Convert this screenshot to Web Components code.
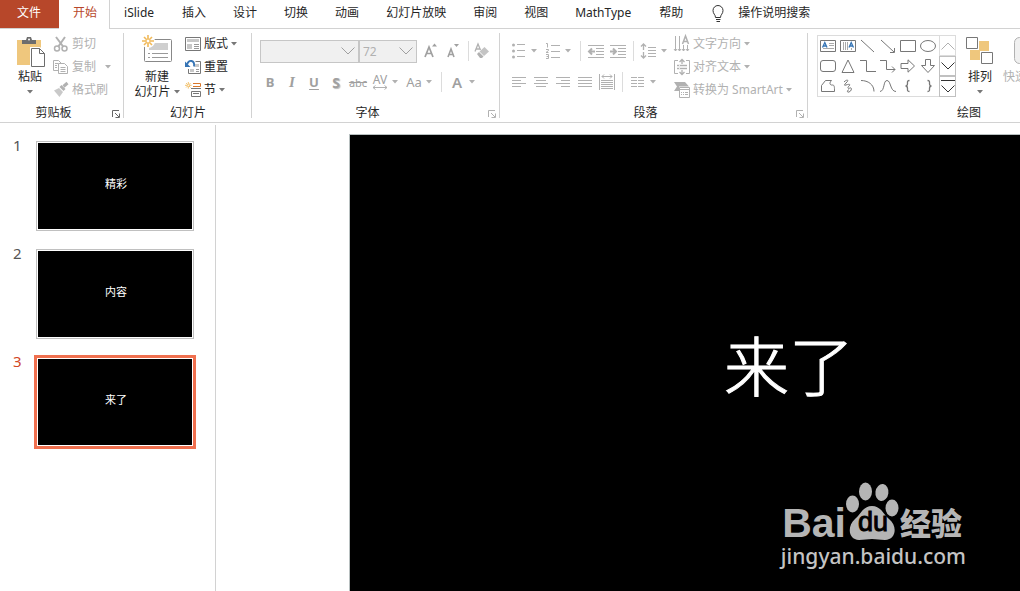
<!DOCTYPE html>
<html lang="zh-CN">
<head>
<meta charset="utf-8">
<title>演示文稿</title>
<style>
html,body{margin:0;height:100%}
body{font:12px/15px "Noto Sans","Noto Sans CJK SC",sans-serif;color:#262626;background:#fff;overflow:hidden}
</style>
</head>
<body>
<slide-app></slide-app>
<script>
const G='#b1b1b1', D='#777', Y='#efc77d', B='#3574b5', O='#d9772b';
const star='<path d="M6 0v12M0 6h12M2 2l8 8M10 2l-8 8" stroke="#f0b95a" stroke-width="1.6" fill="none"/><circle cx="6" cy="6" r="2" fill="#fff" stroke="#f0b95a"/>';
const lines=(list,c=G)=>list.map(([x,y,w])=>`<path d="M${x} ${y}.5h${w}" stroke="${c}"/>`).join('');
// name: [width, height, markup]
const ICONS={
 arrow:[6,4,'<path d="M0 0h6L3 3.500z" fill="currentColor"/>'],
 chevron:[14,8,'<path d="M.5 .5 7 7 13.500 .5" fill="none" stroke="currentColor"/>'],
 chevronUp:[14,8,'<path d="M.5 7.500 7 1l6.500 6.500" fill="none" stroke="currentColor"/>'],
 chevronMore:[14,13,'<path d="M0 .5h14M.5 5.500 7 12l6.500-6.500" fill="none" stroke="currentColor"/>'],
 launcher:[8,8,'<path d="M.5 7V.5H7M3 3l4 4M7.500 3.500v4h-4" fill="none" stroke="currentColor"/>'],
 bulb:[12,18,'<path d="M3.500 12.500c0-3-2.500-3.500-2.500-7a5 5 0 0 1 10 0c0 3.500-2.500 4-2.500 7zM4 14.500h4.500M4.500 16.500h3.500" fill="none" stroke="#333"/>'],
 paste:[28,31,`<path d="M0 3h24v25H0z" fill="${Y}"/><path d="M5 7V3h4l1-3h4l1 3h4v4z" fill="#6d6d6d"/><circle cx="12" cy="2.500" r="1" fill="#fff"/><path d="M13 10h10l6 6v15H13z" fill="#fff"/><path d="M14.500 11.500h8l5 5v13h-13z" fill="#fff" stroke="#6d6d6d"/><path d="M22.500 11.500v5h5" fill="none" stroke="#6d6d6d"/>`],
 cut:[16,16,`<path d="M3 1l7.500 10M12 1 5 11" stroke="${G}" stroke-width="2"/><circle cx="4" cy="12.500" r="2.500" fill="none" stroke="${G}" stroke-width="1.500"/><circle cx="11.500" cy="12.500" r="2.500" fill="none" stroke="${G}" stroke-width="1.500"/>`],
 copy:[16,16,`<path d="M5 11.500H.5v-10h5l3 3" fill="none" stroke="${G}"/><path d="M5.500 4.500h6l3 3v7h-9z" fill="#fff" stroke="${G}"/><path d="M2 4.500h3M2 6.500h2M2 8.500h2M7.500 8.500h5M7.500 10.500h5M7.500 12.500h5" stroke="${G}"/>`],
 brush:[16,16,`<path d="M1 8.500 6 6l4 4-3.500 5z" fill="#c9c9c9"/><path d="M6.500 5 8.500 3 12.500 7l-2 2z" fill="${G}"/><path d="M10.500 4.500 14.500 1" stroke="${G}" stroke-width="3"/>`],
 newslide:[30,28,`<rect x="2.500" y="4.500" width="27" height="22" rx="1" fill="#fff" stroke="#888"/><path d="M7 8h19v7H7z" fill="#cfcfcf"/><path d="M6 18.500h2M10 18.500h16M6 22.500h2M10 22.500h16" stroke="#999"/><circle cx="6" cy="6" r="7" fill="#fff"/>${star}`],
 layout:[16,16,`<path d="M.5 1.500h15v13H.5z" fill="#fff" stroke="#777"/><path d="M2 3h12v3H2zM2 8h5v5H2z" fill="#c8c8c8"/><path d="M9 8.500h5M9 10.500h5M9 12.500h5" stroke="#999"/>`],
 reset:[16,16,`<path d="M10.500 2.500h5v12H3.500V10" fill="#fff" stroke="#777"/><path d="M10 5h4v3h-4zM5 10h4v3H5z" fill="#c8c8c8"/><path d="M11 10.500h3M11 12.500h3" stroke="#999"/><path d="M9 7.500C10 1 4 0 2 5.500" fill="none" stroke="${B}" stroke-width="1.800"/><path d="M0 2.500v5.500h5.500z" fill="${B}"/>`],
 section:[16,16,`<path d="M8 1.500h7.500v3H8" fill="none" stroke="${O}"/><path d="M6 6.500h10" stroke="${D}"/><path d="M6.500 9.500h9v5h-9zM8 11.500h6" fill="none" stroke="${D}"/><g transform="scale(.55)">${star}</g>`],
 growA:[16,16,`<path d="M2 14 6 4l4 10M3.500 10.500h5" fill="none" stroke="#a0a0a0" stroke-width="1.700"/><path d="M9 3.500h5l-2.500-3z" fill="#a0a0a0"/>`],
 shrinkA:[16,16,`<path d="M3 14 6 6l3 8M4 11.500h4" fill="none" stroke="#a0a0a0" stroke-width="1.600"/><path d="M9 1h5l-2.500 3z" fill="#a0a0a0"/>`],
 eraser:[16,16,`<path d="M-1 8.500 2 1l2.500 6M0 6h3.500" fill="none" stroke="${G}" stroke-width="1.300"/><path d="M3.500 8.500 8.500 4 13 8.500 8 13z" fill="#c4c4c4"/><path d="M1 11l2-2 4.500 4.500L6 15H4z" fill="${G}"/>`],
 spacingAV:[16,5,`<path d="M1 2.500h14M3.500 .5l-2.500 2 2.500 2M12.500 .5l2.500 2-2.500 2" fill="none" stroke="${G}"/>`],
 bullets:[16,16,[2,8,14].map(y=>`<circle cx="2.500" cy="${y}" r="1.500" fill="${G}"/><path d="M6 ${y-.5}h8" stroke="${G}"/>`).join('')],
 numbers:[16,16,`<g fill="none" stroke="${G}"><path d="M6 2.500h9M6 8.500h9M6 14.500h9M1 .5h1.500v4M1 6.500h2.500v1L1 9.500h2.500M1 11.500h2.500v4H1M1.500 13.500h2"/></g>`],
 outdent:[16,16,lines([[0,2,16],[8,5,8],[8,8,8],[8,11,8],[0,14,16]])+`<path d="M2 8.500h5M4 5.500l-3 3 3 3" fill="none" stroke="${G}" stroke-width="2"/>`],
 indent:[16,16,lines([[0,2,16],[8,5,8],[8,8,8],[8,11,8],[0,14,16]])+`<path d="M0 8.500h5M3 5.500l3 3-3 3" fill="none" stroke="${G}" stroke-width="2"/>`],
 leading:[16,16,lines([[7,4,8],[7,7,8],[7,10,8],[7,13,8]])+`<path d="M2.500 1v6M2.500 9v6M0 3.500 2.500 1 5 3.500M0 12.500 2.500 15 5 12.500" fill="none" stroke="${G}" stroke-width="1.300"/>`],
 left:[16,16,lines([[1,3,14],[1,6,9],[1,9,14],[1,12,9]])],
 center:[16,16,lines([[1,3,14],[3,6,10],[1,9,14],[3,12,10]])],
 right:[16,16,lines([[1,3,14],[6,6,9],[1,9,14],[6,12,9]])],
 justify:[16,16,lines([[1,3,14],[1,6,14],[1,9,14],[1,12,14]])],
 distribute:[16,16,lines([[2,6,12],[2,8,12],[2,10,12],[2,12,12],[2,14,12]])+`<path d="M.5 0v16M15.500 0v16M3 2.500h10M5 .5l-2 2 2 2M11 .5l2 2-2 2" fill="none" stroke="${G}"/>`],
 columns:[16,16,lines([[1,3,6],[1,6,6],[1,9,6],[1,12,6],[8,3,6],[8,6,6],[8,9,6],[8,12,6]])],
 textdir:[16,16,`<path d="M1.500 0v15M5.500 0v15M9.500 9v6M13.500 9v6M0 13l1.500 2L3 13M4 13l1.500 2L7 13M8 13l1.500 2 1.500-2M12 13l1.500 2 1.500-2" fill="none" stroke="${G}"/><path d="M8.500 8 11.500 0l3 8M9.500 5.500h4" fill="none" stroke="${G}" stroke-width="1.500"/>`],
 aligntext:[16,16,`<path d="M4 1.500H.5v13H4M12 1.500h3.500v13H12" fill="none" stroke="${G}"/><path d="M3 5h10v6H3z" fill="#eee"/><path d="M3 6.500h2M6 6.500h7M3 9.500h2M6 9.500h7" stroke="${G}"/><path d="M8 0v5M8 11v5M5.500 3 8 .5 10.500 3M5.500 13 8 15.500 10.500 13" fill="none" stroke="${G}" stroke-width="1.300"/>`],
 smartart:[16,16,`<path d="M0 0h11l4 4.500H5V9H0l3-4.500z" fill="${G}"/><path d="M5.500 5.500h10v10h-10z" fill="#fff" stroke="${G}"/><path d="M5 7.500h11M7 10.500h1M9 10.500h1M11 10.500h3M7 12.500h1M9 12.500h1M11 12.500h3" stroke="${G}"/>`],
 arrange:[28,28,`<path d="M13 4h10v10H13zM4 13h10v10H4z" fill="${Y}"/><path d="M.5 .5h11v11H.5zM15.500 15.500h11v11h-11z" fill="#fff" stroke="#777"/>`],
 quick:[28,28,'<rect x="1.500" y=".5" width="26" height="26" rx="5" fill="#f0f0f0" stroke="#b1b1b1"/>'],
 textbox:[16,12,`<path d="M.5 .5h15v11H.5z" fill="#fff" stroke="${D}"/><path d="M9 3.500h5M9 5.500h5M3 8.500h11" stroke="#aaa"/><path d="M2.500 7.500 4.800 2.500l2.200 5M3.500 6h3" fill="none" stroke="${B}" stroke-width="1.300"/>`],
 vtextbox:[16,12,`<path d="M.5 .5h15v11H.5z" fill="#fff" stroke="${D}"/><path d="M3.500 2v8M5.500 2v8M7.500 2v8M11.500 8v2" stroke="#aaa"/><path d="M9 7.500 11.200 2.500l2.300 5M10 6h3" fill="none" stroke="${B}" stroke-width="1.300"/>`],
 line:[16,14,`<path d="M1 1l13 12" stroke="${D}"/>`],
 arrowline:[16,14,`<path d="M1 1l13 12M14.500 9v4.500H10" fill="none" stroke="${D}"/>`],
 rect:[16,12,`<path d="M.5 .5h15v11H.5z" fill="none" stroke="${D}"/>`],
 oval:[16,12,`<ellipse cx="8" cy="6" rx="7.500" ry="5.500" fill="none" stroke="${D}"/>`],
 round:[16,12,`<rect x=".5" y=".5" width="15" height="11" rx="2.500" fill="none" stroke="${D}"/>`],
 triangle:[16,14,`<path d="M8 1l6 12.500H2z" fill="none" stroke="${D}"/>`],
 elbow:[16,14,`<path d="M0 1.500h6.500v11H16" fill="none" stroke="${D}"/>`],
 elbowarrow:[16,14,`<path d="M0 1.500h6.500v9H15M12 7.500l3 3-3 3" fill="none" stroke="${D}"/>`],
 rightarrow:[16,14,`<path d="M1 4.500h7V.8L14.500 7 8 13.200V9.500H1z" fill="none" stroke="${D}"/>`],
 downarrow:[16,14,`<path d="M5.500 .5h5v6h4L8 13.500 1.500 6.500h4z" fill="none" stroke="${D}"/>`],
 freeform:[16,14,`<path d="M1.500 12.500v-6l4-5h6c-3 3-1 5 1 4.500 2 0 2 2 2 6.500z" fill="none" stroke="${D}"/>`],
 scribble:[16,14,`<path d="M4 3c3-3 5-2 3 0s-4 4-1 3 5-1 3 1-1 3 1 2 2 3-1 4-1-3 0-2" fill="none" stroke="${D}"/>`],
 arc:[16,14,`<path d="M1 1.500c7 0 13 4 13 11" fill="none" stroke="${D}"/>`],
 curve:[16,14,`<path d="M0 12.500C5 12 3 1.500 7 1.500s3 11 9 11" fill="none" stroke="${D}"/>`],
 lbrace:[16,14,`<path d="M9.500 1.500c-2.500 0-2 1.500-2 3S7 7 5.500 7C7 7 7.500 8 7.500 9.500s-.5 3 2 3" fill="none" stroke="${D}" stroke-width="1.300"/>`],
 rbrace:[16,14,`<path d="M7.500 1.500c2.500 0 2 1.500 2 3S10 7 11.500 7c-1.500 0-2 1-2 2.500s.5 3-2 3" fill="none" stroke="${D}" stroke-width="1.300"/>`],
 paw:[54,58,'<g fill="#b5b5b5"><ellipse cx="6.500" cy="22" rx="6.500" ry="8.500"/><ellipse cx="19.500" cy="9.500" rx="6.500" ry="9"/><ellipse cx="36" cy="10.500" rx="6.500" ry="8.500" transform="rotate(8 36 10)"/><ellipse cx="46" cy="26" rx="6.500" ry="8.500"/><path d="M26 24c9 0 11 8 17 13 9 7 7 21-4 21-5 0-9-1-13-1s-8 1-13 1C2 58 1 44 9 37c6-5 8-13 17-13z"/></g>']
};
const define=(name,css,html,setup)=>{
  const tpl=document.createElement('template');
  tpl.innerHTML=`<style>*{box-sizing:border-box}:host{box-sizing:border-box}button,select{font:inherit;color:inherit;background:none;border:0;padding:0;margin:0}${css}</style>${html}`;
  customElements.define(name,class extends HTMLElement{
    constructor(){super();this.attachShadow({mode:'open'}).append(tpl.content.cloneNode(true))}
    connectedCallback(){setup&&setup(this,this.shadowRoot)}
  });
};

define('ui-icon',':host{display:inline-flex;flex:none}svg{display:block;overflow:visible}','<svg aria-hidden="true"></svg>',(el,r)=>{
  const [w,h,body]=ICONS[el.getAttribute('name')], s=r.querySelector('svg');
  s.setAttribute('width',w);s.setAttribute('height',h);s.setAttribute('viewBox',`0 0 ${w} ${h}`);s.innerHTML=body;
});

define('ribbon-tab',`:host{display:flex;flex:none}button{padding:0 13px 0 14px;line-height:26px;height:28px;white-space:nowrap;display:flex;align-items:flex-start}
:host([kind=file]) button{background:#b7472a;color:#fff;padding:0 18px 0 17px}
:host([kind=latin]) button{padding-right:14px}
:host([kind=active]){height:29px}:host([kind=active]) button{height:29px;background:#fff;color:#b7472a;border-right:1px solid #d2d2d2;padding-right:12px}
::slotted(ui-icon){margin:5px 14px 0 2px}`,'<button role="tab"><slot></slot></button>');

define('ribbon-tabs',`:host{display:flex;height:29px;border-bottom:1px solid #d2d2d2}`,'<slot></slot>');

define('ribbon-group',`:host{display:flex;flex-direction:column;flex:none;position:relative;height:93px}
.body{display:flex;height:73px;padding:0 0 0 var(--inset,8px)}
footer{display:flex;height:20px;line-height:22px;text-align:center}
footer span{flex:1}footer button{display:none;width:17px;color:#b1b1b1;align-items:center;justify-content:flex-end;padding:3px 4px 0 0}
:host([launcher]) footer button{display:flex}:host([launcher=on]) footer button{color:#666}
:host::after{content:"";position:absolute;right:0;top:4px;bottom:4px;width:1px;background:#d2d2d2}`,
`<div class="body"><slot></slot></div><footer><span></span><button aria-label="更多选项"><ui-icon name="launcher"></ui-icon></button></footer>`,
(el,r)=>{r.querySelector('span').textContent=el.getAttribute('label')});

define('big-button',`:host{display:flex;flex:none;width:46px;padding-top:6px}
button{display:flex;flex-direction:column;align-items:center;width:100%;white-space:nowrap}
.pic{height:34px;display:flex;align-items:flex-start;padding:var(--drop,2px) 0 0 var(--nudge,0)}
.second{display:flex;align-items:center;gap:3px;height:15px}.second ui-icon{color:#777}
:host([disabled]) button{color:#b1b1b1}`,
`<button><span class="pic"></span><span><slot></slot></span><span class="second"><slot name="second"></slot><ui-icon name="arrow"></ui-icon></span></button>`,
(el,r)=>{r.querySelector('.pic').innerHTML=`<ui-icon name="${el.getAttribute('icon')}"></ui-icon>`});

define('small-button',`:host{display:flex;height:23px}
button{display:flex;align-items:center;gap:3px;white-space:nowrap}.drop{color:#777;display:none}.pic{display:flex}
:host([disabled]) button,:host([disabled]) .drop{color:#b1b1b1}
:host([menu]) .drop{display:inline-flex}:host([menu=split]) .drop{margin-left:6px}`,
`<button><span class="pic"></span><slot></slot><ui-icon class="drop" name="arrow"></ui-icon></button>`,
(el,r)=>{r.querySelector('.pic').innerHTML=`<ui-icon name="${el.getAttribute('icon')}"></ui-icon>`});

define('tool-button',`:host{display:flex}
button{display:flex;align-items:center;gap:4px;color:#a0a0a0;height:24px}
.face{display:flex;flex-direction:column;align-items:center;justify-content:center;width:16px;white-space:nowrap}
.drop{color:#b1b1b1;display:none;margin-right:2px}:host([menu]) .drop{display:inline-flex}`,
`<button><span class="face"><slot></slot></span><ui-icon class="drop" name="arrow"></ui-icon></button>`,
(el,r)=>{r.querySelector('button').setAttribute('aria-label',el.getAttribute('label'));
 if(el.hasAttribute('icon'))r.querySelector('.face').innerHTML=`<ui-icon name="${el.getAttribute('icon')}"></ui-icon>`});

define('tool-divider',':host{display:block;width:3px;height:20px;border:solid transparent;border-width:0 1px;background:#dcdcdc content-box;background-clip:content-box;align-self:center}','');

define('combo-box',`:host{display:grid;height:23px;width:var(--w);color:#b1b1b1}
select{grid-area:1/1;appearance:none;width:100%;border:1px solid #c6c6c6;background:#f0f0f0;padding:0 3px;opacity:1;font-size:12px;border-radius:0}
ui-icon{grid-area:1/1;justify-self:end;align-self:center;margin-right:4px;pointer-events:none;color:#a0a0a0}`,
`<select disabled><option></option></select><ui-icon name="chevron"></ui-icon>`,
(el,r)=>{r.querySelector('option').textContent=el.getAttribute('value');r.querySelector('select').setAttribute('aria-label',el.getAttribute('label'))});

define('shape-gallery',`:host{display:grid;grid-template-columns:122px 17px;height:62px;margin-top:6px;border:0}
.shapes{display:grid;grid-template-columns:repeat(6,20px);grid-auto-rows:20px;border:1px solid #dcdcdc;border-right:0}
.shapes button,.nav button{display:flex;align-items:center;justify-content:center}
.nav{display:grid;grid-template-rows:21px 20px 21px;color:#333}.nav button{border:1px solid #c0c0c0}.nav button:first-child{color:#b1b1b1;border-color:#dcdcdc}`,
`<div class="shapes"></div><div class="nav"><button aria-label="上一行"><ui-icon name="chevronUp"></ui-icon></button><button aria-label="下一行"><ui-icon name="chevron"></ui-icon></button><button aria-label="其他"><ui-icon name="chevronMore"></ui-icon></button></div>`,
(el,r)=>{r.querySelector('.shapes').innerHTML='textbox vtextbox line arrowline rect oval round triangle elbow elbowarrow rightarrow downarrow freeform scribble arc curve lbrace rbrace'.split(' ').map(n=>`<button aria-label="${n}"><ui-icon name="${n}"></ui-icon></button>`).join('')});

define('slide-thumb',`:host{display:block}
button{display:grid;grid-template-columns:25px 154px;text-align:left;width:100%;color:#555}
.num{font-size:15px;line-height:16px}
.page{height:86px;margin-top:6px;background:#000;color:#fff;display:flex;align-items:center;justify-content:center;font-size:11px;padding:0 0 5px 2px;box-shadow:0 0 0 1px #fff,0 0 0 2px #c0c0c0}
:host([selected]) button{color:#d24726}:host([selected]) .page{box-shadow:0 0 0 1px #fff,0 0 0 4px #f0704f}`,
`<button><span class="num"></span><span class="page"><slot></slot></span></button>`,
(el,r)=>{r.querySelector('.num').textContent=el.getAttribute('number')});

define('site-mark',`:host{position:absolute;right:54px;bottom:21px;display:flex;flex-direction:column;align-items:flex-end;color:#b5b5b5}
.top{display:flex;align-items:flex-end;height:60px;padding-right:4px;font-family:"Liberation Sans","Noto Sans CJK SC",sans-serif;font-weight:700}
.bai{font-size:41px;line-height:38px}.paw{display:grid;margin:0 0 2px}
.paw>*{grid-area:1/1}.du{font-size:27px;line-height:27px;font-weight:400;-webkit-text-stroke:1px #000;color:#000;align-self:end;justify-self:center;padding-bottom:4px}
.cn{font-size:31px;line-height:34px;font-weight:900}.url{font-size:21px;line-height:28px;color:#c4c4c4;font-weight:500}`,
`<div class="top"><span class="bai">Bai</span><span class="paw"><ui-icon name="paw"></ui-icon><span class="du">du</span></span><span class="cn">经验</span></div><div class="url">jingyan.baidu.com</div>`);

define('slide-stage',`:host{flex:1;min-width:0;position:relative;overflow:hidden;padding:11px 0 0 133px;display:block}
.slide{width:880px;aspect-ratio:16/9;background:#000;border:1px solid #b8c0c0;display:flex;align-items:center;justify-content:center;padding-bottom:32px}
h1{margin:0;font-weight:300;font-size:65px;line-height:80px;color:#fff;-webkit-text-stroke:1px #fff}`,
`<div class="slide"><h1><slot></slot></h1></div><site-mark></site-mark>`);

define('slide-app',`:host{display:flex;flex-direction:column;height:100vh;overflow:hidden}
.ribbon{display:flex;border-bottom:1px solid #d2d2d2;overflow:hidden;flex:none}
.clip{width:124px;--inset:7px}.slides{width:128px;--inset:10px}.font{width:248px}.para{width:308px;--inset:11px}.draw{width:322px;--inset:9px}
.col{display:flex;flex-direction:column;padding-top:3px}.slides .col{margin-left:5px}
.tools{display:flex;flex-direction:column;padding-top:7px}
.row{display:flex;align-items:center;gap:6px;height:30px}.row+.row{height:32px}.font .row+.row{padding-left:2px}
.combos{display:flex}
.para .col{margin-left:5px}
.b{font-weight:700;font-size:13px}.i{font-style:italic;font-family:"Liberation Serif",serif;font-size:15px;font-weight:700}.u{font-weight:700;font-size:13px;text-decoration:underline;text-underline-offset:2px}
.s{font-weight:700;font-size:14px;text-shadow:1px 1px 1px #bbb}.k{font-size:11px;text-decoration:line-through}.av{line-height:11px}.aa{font-size:13px}.fa{font-size:15px;font-weight:600}
main{display:flex;flex:1;min-height:0;padding-top:2px}
nav{width:216px;flex:none;border-right:1px solid #d2d2d2;padding:12px 0 0 13px;display:flex;flex-direction:column;gap:16px}
slide-stage{margin-top:-2px}
.draw big-button{margin-left:1px}`,
`<ribbon-tabs role="tablist"><ribbon-tab kind="file">文件</ribbon-tab><ribbon-tab kind="active">开始</ribbon-tab><ribbon-tab kind="latin">iSlide</ribbon-tab><ribbon-tab>插入</ribbon-tab><ribbon-tab>设计</ribbon-tab><ribbon-tab>切换</ribbon-tab><ribbon-tab>动画</ribbon-tab><ribbon-tab>幻灯片放映</ribbon-tab><ribbon-tab>审阅</ribbon-tab><ribbon-tab>视图</ribbon-tab><ribbon-tab kind="latin">MathType</ribbon-tab><ribbon-tab>帮助</ribbon-tab><ribbon-tab><ui-icon name="bulb"></ui-icon>操作说明搜索</ribbon-tab></ribbon-tabs>
<div class="ribbon">
<ribbon-group class="clip" label="剪贴板" launcher="on"><big-button icon="paste" style="--nudge:2px">粘贴</big-button><div class="col"><small-button icon="cut" disabled>剪切</small-button><small-button icon="copy" disabled menu="split">复制</small-button><small-button icon="brush" disabled>格式刷</small-button></div></ribbon-group>
<ribbon-group class="slides" label="幻灯片"><big-button icon="newslide" style="--drop:0px">新建<span slot="second">幻灯片</span></big-button><div class="col"><small-button icon="layout" menu>版式</small-button><small-button icon="reset">重置</small-button><small-button icon="section" menu>节</small-button></div></ribbon-group>
<ribbon-group class="font" label="字体" launcher><div class="tools">
<div class="row"><div class="combos"><combo-box label="字体" value="" style="--w:99px"></combo-box><combo-box label="字号" value="72" style="--w:58px"></combo-box></div><tool-button icon="growA" label="增大字号"></tool-button><tool-button icon="shrinkA" label="减小字号"></tool-button><tool-divider></tool-divider><tool-button icon="eraser" label="清除格式"></tool-button></div>
<div class="row"><tool-button label="加粗"><span class="b">B</span></tool-button><tool-button label="倾斜"><span class="i">I</span></tool-button><tool-button label="下划线"><span class="u">U</span></tool-button><tool-button label="阴影"><span class="s">S</span></tool-button><tool-button label="删除线"><span class="k">abc</span></tool-button><tool-button label="字符间距" menu><span class="av">AV</span><ui-icon name="spacingAV"></ui-icon></tool-button><tool-button label="更改大小写" menu><span class="aa">Aa</span></tool-button><tool-divider></tool-divider><tool-button label="字体颜色" menu><span class="fa">A</span></tool-button></div>
</div></ribbon-group>
<ribbon-group class="para" label="段落" launcher><div class="tools">
<div class="row"><tool-button icon="bullets" label="项目符号" menu></tool-button><tool-button icon="numbers" label="编号" menu></tool-button><tool-divider></tool-divider><tool-button icon="outdent" label="降低级别"></tool-button><tool-button icon="indent" label="提高级别"></tool-button><tool-divider></tool-divider><tool-button icon="leading" label="行距" menu></tool-button></div>
<div class="row"><tool-button icon="left" label="左对齐"></tool-button><tool-button icon="center" label="居中"></tool-button><tool-button icon="right" label="右对齐"></tool-button><tool-button icon="justify" label="两端对齐"></tool-button><tool-button icon="distribute" label="分散对齐"></tool-button><tool-divider></tool-divider><tool-button icon="columns" label="分栏" menu></tool-button></div>
</div><div class="col"><small-button icon="textdir" disabled menu>文字方向</small-button><small-button icon="aligntext" disabled menu>对齐文本</small-button><small-button icon="smartart" disabled menu>转换为 SmartArt</small-button></div></ribbon-group>
<ribbon-group class="draw" label="绘图"><shape-gallery></shape-gallery><big-button icon="arrange">排列</big-button><big-button icon="quick" disabled>快速样式</big-button></ribbon-group>
</div>
<main><nav aria-label="幻灯片"><slide-thumb number="1">精彩</slide-thumb><slide-thumb number="2">内容</slide-thumb><slide-thumb number="3" selected>来了</slide-thumb></nav><slide-stage>来了</slide-stage></main>`);
</script>
</body>
</html>
